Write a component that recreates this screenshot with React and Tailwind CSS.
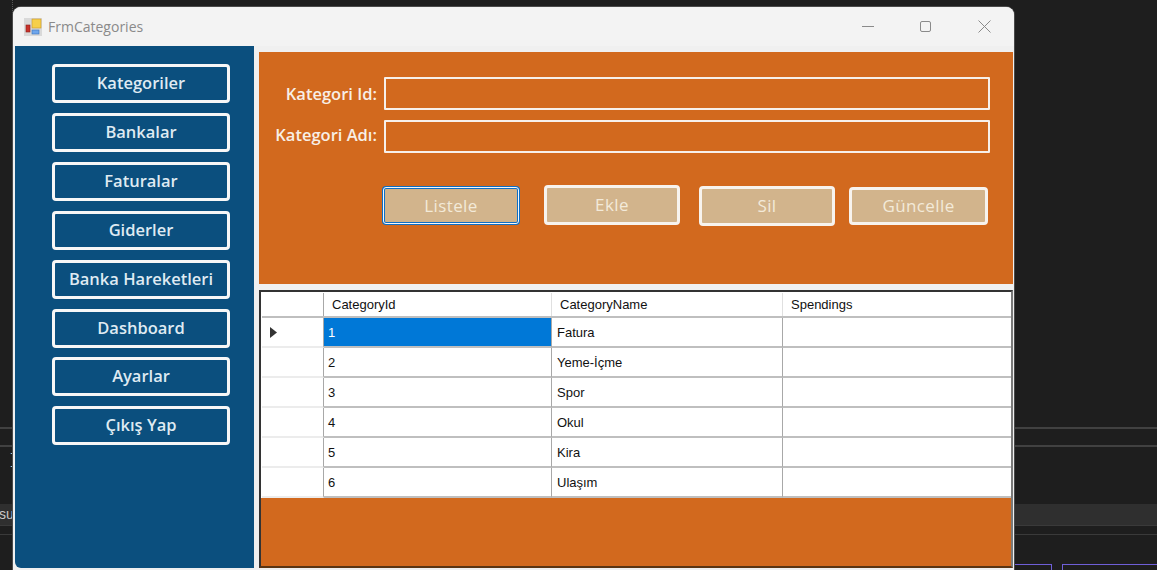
const menuItems = ['Kategoriler', 'Bankalar', 'Faturalar', 'Giderler', 'Banka Hareketleri', 'Dashboard', 'Ayarlar', 'Çıkış Yap'];

const rows = [
  { id: 1, name: 'Fatura' },
  { id: 2, name: 'Yeme-İçme' },
  { id: 3, name: 'Spor' },
  { id: 4, name: 'Okul' },
  { id: 5, name: 'Kira' },
  { id: 6, name: 'Ulaşım' },
];

function FormIcon() {
  return (
    <svg width="18" height="18" viewBox="0 0 18 18">
      <rect x="0" y="0" width="18" height="18" fill="#d9d9d9" />
      <rect x="8" y="1" width="9" height="9" fill="#f6cf4a" stroke="#c9962b" strokeWidth="0.6" />
      <rect x="2" y="7" width="4" height="7" fill="#c8322b" stroke="#8e1f1a" strokeWidth="0.6" />
      <rect x="8" y="12" width="7" height="4" fill="#6ea6ec" stroke="#3b72bb" strokeWidth="0.6" />
    </svg>
  );
}

function ActionButton({ label, className }) {
  return (
    <button className={`flex items-center justify-center rounded-[4px] border-[3px] bg-[#d2b48c] text-[17px] font-medium tracking-[0.4px] text-[#f3ead9] ${className}`}>
      {label}
    </button>
  );
}

export default function App() {
  return (
    <div className="relative h-[570px] w-[1157px] overflow-hidden bg-[#1e1e1e] font-['Open_Sans',sans-serif]">
      {/* IDE behind the form */}
      <div className="h-[427px] w-[13px] border-r border-dotted border-[#555]" />
      <div className="h-[20px] border-y-2 border-[#414141]" />
      <div className="h-[57px] pl-[9px] pt-[3px] font-['Liberation_Mono',monospace] text-[14px] leading-[20px] text-[#c8c8c8]">]</div>
      <div className="flex h-[21px] items-center bg-[#2f2f2f] font-['Liberation_Sans',sans-serif] text-[14px] text-[#c8c8c8]">
        <span className="-ml-[1px]">suc</span>
      </div>
      <div className="h-[10px] border-y border-[#3a3a3a]" />
      <div className="flex h-[35px] pl-[1013px] pt-[29px]">
        <div className="h-[6px] w-[39px] border-r border-t border-[#6f5fd8]" />
        <div className="ml-[10px] h-[6px] flex-1 border-l border-t border-[#6f5fd8]" />
      </div>

      {/* form window */}
      <div className="absolute left-[13px] top-[7px] flex h-[563px] w-[1001px] flex-col rounded-t-[8px] bg-[#f0f0f0] shadow-[0_0_0_1px_#4a4a4a]">
        <div className="flex h-[39px] shrink-0 items-center rounded-t-[8px] bg-[#f3f3f3] pl-[11px] text-[14px] text-[#8a8a8a]">
          <FormIcon />
          <span className="ml-[6px]">FrmCategories</span>
          <div className="ml-auto flex items-center pr-[23px]">
            <div className="h-px w-[12px] bg-[#8a8a8a]" />
            <div className="ml-[46px] h-[11px] w-[11px] rounded-[2px] border border-[#8a8a8a]" />
            <svg className="ml-[47px]" width="13" height="13" viewBox="0 0 13 13" fill="none" stroke="#8a8a8a" strokeWidth="1">
              <path d="M0.5 0.5 L12.5 12.5 M12.5 0.5 L0.5 12.5" />
            </svg>
          </div>
        </div>

        <div className="flex min-h-0 flex-1 pb-[2px] pl-[2px]">
          <aside className="flex w-[239px] shrink-0 flex-col gap-[10px] rounded-bl-[6px] bg-[#0b4f7e] pl-[37px] pt-[18px]">
            {menuItems.map((item, i) => (
              <button
                key={item}
                className={`flex h-[39px] w-[178px] items-center justify-center rounded-[4px] border-[3px] border-[#f7f7f7] text-[16.5px] font-semibold text-[#dfeaf2] ${i === 6 ? '-mt-px' : ''}`}
              >
                {item}
              </button>
            ))}
          </aside>

          <main className="ml-[5px] flex w-[754px] flex-col pt-[6px]">
            <section className="h-[232px] shrink-0 bg-[#d2691e] pt-[25px]">
              <div className="flex h-[33px] items-center">
                <label className="w-[118px] pt-[2px] text-right text-[16.5px] font-semibold text-[#f8efe6]">Kategori Id:</label>
                <div className="ml-[7px] h-[33px] w-[606px] rounded-[1px] border-2 border-[#f7f0ea]" />
              </div>
              <div className="mt-[10px] flex h-[33px] items-center">
                <label className="w-[118px] whitespace-nowrap pb-[3px] text-right text-[16.5px] font-semibold text-[#f8efe6]">Kategori Adı:</label>
                <div className="ml-[7px] h-[33px] w-[606px] rounded-[1px] border-2 border-[#f7f0ea]" />
              </div>
              <div className="ml-[123px] mt-[32px] flex items-start">
                <ActionButton label="Listele" className="mt-px h-[39px] w-[138px] border-[#0f6fc4] outline outline-1 outline-offset-[-2px] outline-[#f7f7f7]" />
                <ActionButton label="Ekle" className="ml-[24px] h-[40px] w-[136px] border-[#f7f3ee]" />
                <ActionButton label="Sil" className="ml-[19px] mt-px h-[40px] w-[136px] border-[#f7f3ee]" />
                <ActionButton label="Güncelle" className="ml-[14px] mt-[2px] h-[38px] w-[139px] border-[#f7f3ee]" />
              </div>
            </section>

            <section className="mt-[6px] flex h-[278px] flex-col border-2 border-[#333] border-b-[#5a3413] border-r-[#7a7a7a] bg-[#d2691e] font-['Liberation_Sans',sans-serif] text-[13px] text-[#111]">
              <div className="flex flex-col bg-white">
                <div className="ml-px mt-px flex h-[25px] border-b-2 border-[#bfbfbf]">
                  <div className="w-[62px] border-r border-[#a8a8a8]" />
                  <div className="flex w-[228px] items-center border-r border-[#e0e0e0] pl-[8px]">CategoryId</div>
                  <div className="flex w-[231px] items-center border-r border-[#e0e0e0] pl-[8px]">CategoryName</div>
                  <div className="flex flex-1 items-center pl-[8px]">Spendings</div>
                </div>
                {rows.map((row, i) => (
                  <div key={row.id} className="ml-px flex h-[30px]">
                    <div className="flex w-[62px] items-center border-b-2 border-r border-b-[#ececec] border-r-[#a8a8a8] pl-[8px]">
                      {i === 0 && (
                        <svg width="7" height="11" viewBox="0 0 7 11">
                          <path d="M0 0 L7 5.5 L0 11 Z" fill="#333" />
                        </svg>
                      )}
                    </div>
                    <div className={`flex w-[228px] items-center border-b-2 border-r border-b-[#bfbfbf] border-r-[#a8a8a8] pl-[4px] pt-[2px] ${i === 0 ? 'bg-[#0078d7] text-white' : ''}`}>{row.id}</div>
                    <div className="flex w-[231px] items-center border-b-2 border-r border-b-[#bfbfbf] border-r-[#a8a8a8] pl-[5px] pt-[2px]">{row.name}</div>
                    <div className="flex-1 border-b-2 border-[#bfbfbf]" />
                  </div>
                ))}
              </div>
            </section>
          </main>
        </div>
      </div>
    </div>
  );
}
